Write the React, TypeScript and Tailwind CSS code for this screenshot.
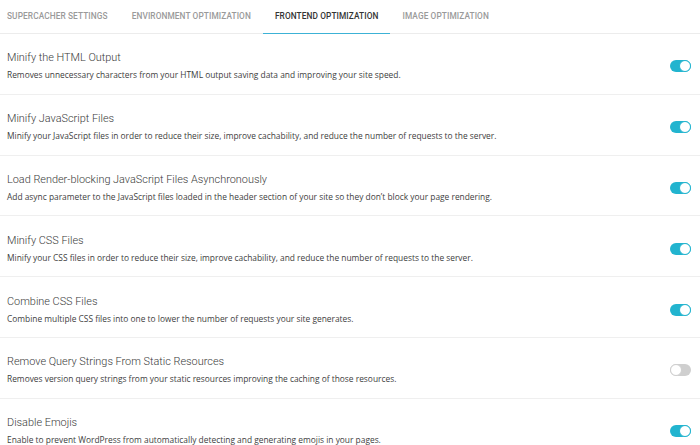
import { useState } from "react";

// ---------------------------------------------------------------------------
// Toggle switch
// ---------------------------------------------------------------------------

function Toggle({ checked, onChange }: { checked: boolean; onChange: () => void }) {
  return (
    <button
      type="button"
      role="switch"
      aria-checked={checked}
      onClick={onChange}
      className={`relative flex h-[12px] w-[21px] shrink-0 items-center rounded-full transition-colors ${
        checked ? "bg-[#22b4cf]" : "bg-[#cfcfcf]"
      }`}
    >
      <span
        className={`absolute top-0 h-[12px] w-[12px] rounded-full bg-white border-[1.5px] ${
          checked ? "left-[9px] border-[#22b4cf]" : "left-0 border-[#cfcfcf]"
        }`}
      />
    </button>
  );
}

const tabs = [
  "SuperCacher Settings",
  "Environment Optimization",
  "Frontend Optimization",
  "Image Optimization",
];

const initialOptions = [
  {
    title: "Minify the HTML Output",
    desc: "Removes unnecessary characters from your HTML output saving data and improving your site speed.",
    on: true,
  },
  {
    title: "Minify JavaScript Files",
    desc: "Minify your JavaScript files in order to reduce their size, improve cachability, and reduce the number of requests to the server.",
    on: true,
  },
  {
    title: "Load Render-blocking JavaScript Files Asynchronously",
    desc: "Add async parameter to the JavaScript files loaded in the header section of your site so they don’t block your page rendering.",
    on: true,
  },
  {
    title: "Minify CSS Files",
    desc: "Minify your CSS files in order to reduce their size, improve cachability, and reduce the number of requests to the server.",
    on: true,
  },
  {
    title: "Combine CSS Files",
    desc: "Combine multiple CSS files into one to lower the number of requests your site generates.",
    on: true,
  },
  {
    title: "Remove Query Strings From Static Resources",
    desc: "Removes version query strings from your static resources improving the caching of those resources.",
    on: false,
  },
  {
    title: "Disable Emojis",
    desc: "Enable to prevent WordPress from automatically detecting and generating emojis in your pages.",
    on: true,
  },
];

export default function App() {
  const [active, setActive] = useState(2);
  const [options, setOptions] = useState(initialOptions);

  const toggle = (i: number) =>
    setOptions((prev) => prev.map((o, j) => (j === i ? { ...o, on: !o.on } : o)));

  return (
    <div className="w-[700px] h-[445px] overflow-hidden bg-white">
      {/* Tabs */}
      <div className="flex h-[34px] border-b border-[#ececec] font-['Roboto',sans-serif]">
        {tabs.map((t, i) => (
          <button
            key={t}
            type="button"
            onClick={() => setActive(i)}
            className={`h-[34px] px-[12px] -mb-px text-[8.3px] font-medium uppercase tracking-[0.1px] border-b-[1.5px] ${
              i === 0 ? "pl-[7px]" : ""
            } ${
              active === i
                ? "text-[#333] border-[#3cb2d6]"
                : "text-[#9a9a9a] border-transparent"
            }`}
          >
            {t}
          </button>
        ))}
      </div>

      {/* Options */}
      <div>
        {options.map((o, i) => (
          <div
            key={o.title}
            className="flex items-center justify-between h-[60.8px] pl-[7px] pr-[9px] pt-[5px] border-b border-[#efefef]"
          >
            <div className="min-w-0">
              <div className="font-['Roboto',sans-serif] font-light text-[10.9px] leading-[16px] text-[#3a3a3a]">
                {o.title}
              </div>
              <div className="mt-[2px] font-['Open_Sans',sans-serif] text-[8.4px] leading-[14px] text-[#3e3e3e]">
                {o.desc}
              </div>
            </div>
            <Toggle checked={o.on} onChange={() => toggle(i)} />
          </div>
        ))}
      </div>
    </div>
  );
}
